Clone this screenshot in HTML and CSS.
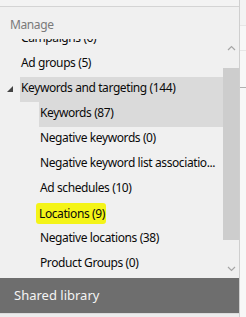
FILE: index.html
```html
<!DOCTYPE html>
<html>
<head>
<meta charset="utf-8">
<link rel="stylesheet" href="styles.css">
</head>
<body>
<div class="frame">
  <div class="panel">
    <div class="topstrip"></div>
    <div class="header">Manage</div>
    <div class="listarea">
      <div class="items">
        <div class="list">
          <div class="row l1"><span class="lbl">Campaigns (6)</span></div>
          <div class="row l1"><span class="lbl">Ad groups (5)</span></div>
          <div class="row l1 sel">
            <svg class="tri" width="6" height="6" viewBox="0 0 6 6"><polygon points="6,0 6,6 0,6" fill="#444"/></svg>
            <span class="lbl">Keywords and targeting (144)</span>
          </div>
          <div class="row l2 sel"><span class="lbl">Keywords (87)</span></div>
          <div class="row l2"><span class="lbl">Negative keywords (0)</span></div>
          <div class="row l2"><span class="lbl">Negative keyword list associatio...</span></div>
          <div class="row l2"><span class="lbl">Ad schedules (10)</span></div>
          <div class="row l2"><span class="lbl mark">Locations (9)</span></div>
          <div class="row l2"><span class="lbl">Negative locations (38)</span></div>
          <div class="row l2"><span class="lbl">Product Groups (0)</span></div>
        </div>
      </div>
      <div class="scrollbar">
        <div class="arrow">
          <svg width="9" height="6" viewBox="0 0 9 6"><polyline points="1,5 4.5,1.5 8,5" fill="none" stroke="#a6a6a6" stroke-width="1.2"/></svg>
        </div>
        <div class="track"><div class="thumb"></div></div>
        <div class="arrow">
          <svg width="9" height="6" viewBox="0 0 9 6"><polyline points="1,1 4.5,4.5 8,1" fill="none" stroke="#a6a6a6" stroke-width="1.2"/></svg>
        </div>
      </div>
    </div>
    <div class="shared">Shared library</div>
    <div class="bottomstrip"></div>
  </div>
  <div class="side">
    <div class="s1"></div>
    <div class="s2"></div>
    <div class="s3"></div>
  </div>
</div>
</body>
</html>
```
FILE: styles.css
```css
html, body {
  margin: 0;
  padding: 0;
  background: #f0f0f0;
  font-family: "Noto Sans", "Open Sans", sans-serif;
  font-size: 12px;
  letter-spacing: -0.4px;
  color: #0a0a0a;
}
.frame {
  display: flex;
  width: 246px;
  height: 317px;
}
.panel {
  width: 239px;
  border-right: 1px solid #cfcfcf;
  display: flex;
  flex-direction: column;
  background: #f0f0f0;
}
.topstrip {
  height: 6px;
  border-bottom: 1px solid #d4d4d4;
  background: #f3f3f3;
}
.header {
  box-sizing: border-box;
  height: 32px;
  padding: 4px 0 0 10px;
  line-height: 28px;
  color: #7a7a7a;
  flex: none;
}
.listarea {
  height: 238px;
  display: flex;
  flex: none;
}
.items {
  flex: 1;
  overflow: hidden;
}
.list {
  margin-top: -12px;
}
.row {
  height: 25px;
  display: flex;
  align-items: flex-start;
  position: relative;
  white-space: nowrap;
}
.l1 { padding-left: 20px; }
.l2 { padding-left: 39px; }
.lbl {
  padding-left: 1px;
  line-height: 22px;
  padding-bottom: 3px;
}
.sel .lbl { flex: 1; background: #dadada; }
.tri {
  position: absolute;
  left: 7px;
  top: 9px;
}
.mark {
  background: #f4f418;
  line-height: 21px;
  padding: 0 1px 0 3px;
  margin-left: -3px;
  margin-top: 1px;
  border-radius: 3px;
}
.scrollbar {
  width: 16px;
  display: flex;
  flex-direction: column;
  background: #f0f0f0;
}
.arrow {
  height: 17px;
  display: flex;
  align-items: center;
  justify-content: center;
}
.track {
  flex: 1;
  padding-top: 12px;
  padding-bottom: 20px;
  display: flex;
}
.thumb {
  flex: 1;
  background: #cdcdcd;
}
.shared {
  height: 35px;
  background: #6e6e6e;
  color: #f4f4f4;
  font-size: 13px;
  letter-spacing: 0;
  line-height: 35px;
  padding-left: 14px;
  margin-top: 1px;
  flex: none;
}
.bottomstrip {
  flex: 1;
  background: #ececec;
  border-top: 1px solid #dcdcdc;
}
.side {
  flex: 1;
  background: #f7f7f7;
}
.s1 { height: 25px; border-bottom: 1px solid #e6e6e6; background: #f3f3f3; }
.s2 { height: 24px; border-bottom: 1px solid #e6e6e6; }
.s3 { height: 36px; border-bottom: 1px solid #b0b0b0; }
```
